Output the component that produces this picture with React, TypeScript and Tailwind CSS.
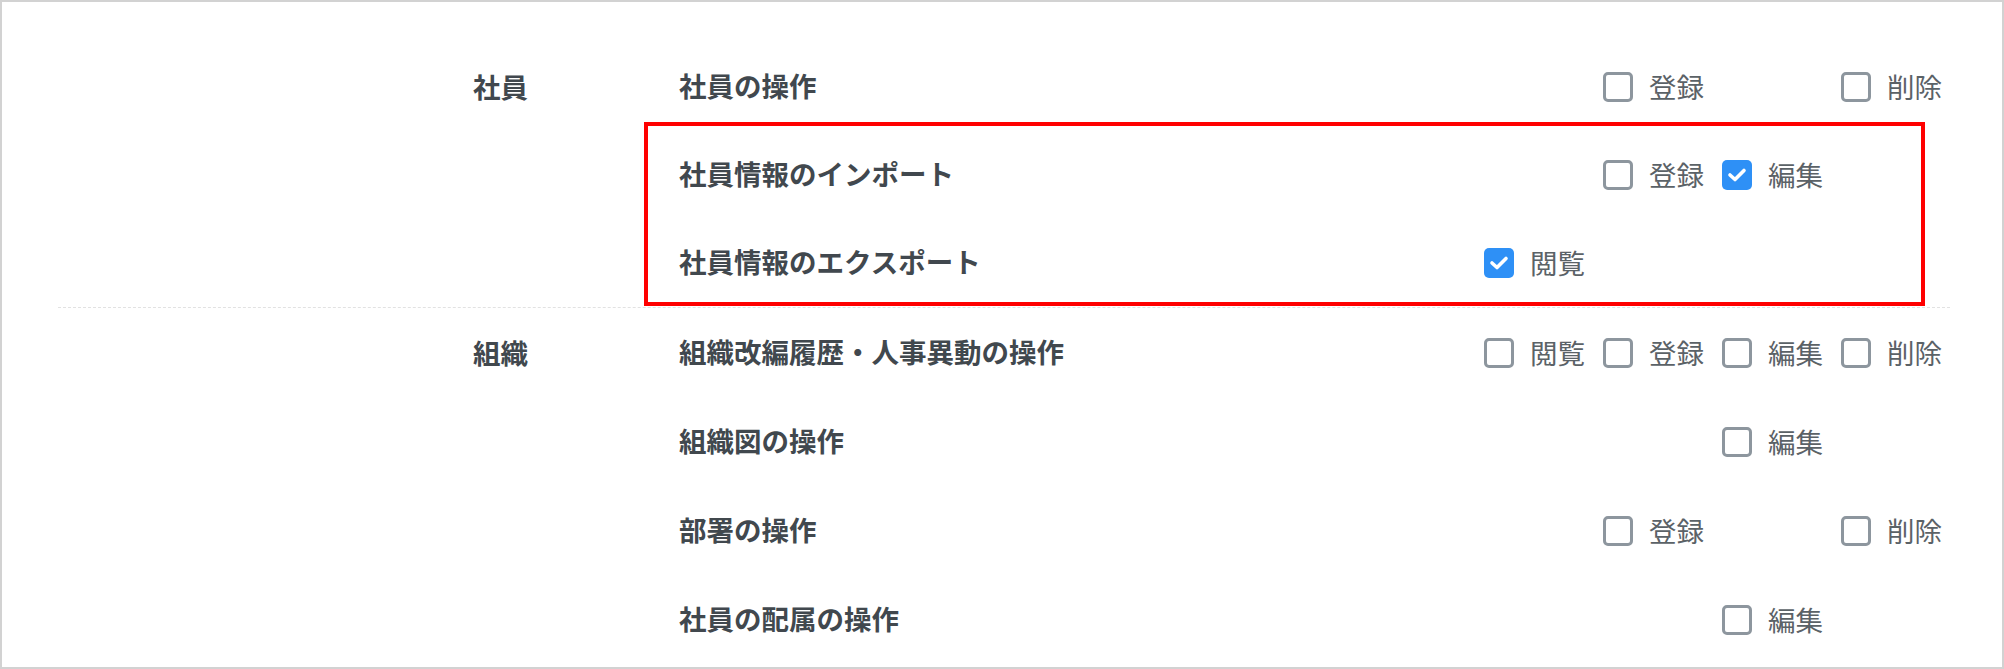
import React from 'react'

type Perm = 'view' | 'create' | 'edit' | 'delete'

const PERM_LABELS: Record<Perm, string> = {
  view:   '閲覧',
  create: '登録',
  edit:   '編集',
  delete: '削除',
}

const PERM_ORDER: Perm[] = ['view', 'create', 'edit', 'delete']

type Row = {
  label: string
  perms: Partial<Record<Perm, boolean>>
}

type Section = {
  category: string
  rowHeight: string
  rows: Row[]
}

const SECTIONS: Section[] = [
  {
    category: '社員',
    rowHeight: 'h-[88px]',
    rows: [
      { label: '社員の操作',             perms: { create: false, delete: false } },
      { label: '社員情報のインポート',   perms: { create: false, edit: true } },
      { label: '社員情報のエクスポート', perms: { view: true } },
    ],
  },
  {
    category: '組織',
    rowHeight: 'h-[89px]',
    rows: [
      { label: '組織改編履歴・人事異動の操作', perms: { view: false, create: false, edit: false, delete: false } },
      { label: '組織図の操作',                 perms: { edit: false } },
      { label: '部署の操作',                   perms: { create: false, delete: false } },
      { label: '社員の配属の操作',             perms: { edit: false } },
    ],
  },
]

function CheckBox({ checked }: { checked: boolean }) {
  if (checked) {
    return (
      <span className="w-[30px] h-[30px] rounded-[5px] bg-[#2e90f6] flex items-center justify-center shrink-0">
        <svg width="20" height="16" viewBox="0 0 20 16" fill="none">
          <path d="M3 8 L8 12.5 L17 3.5" stroke="white" strokeWidth="3.6" strokeLinecap="round" strokeLinejoin="round" />
        </svg>
      </span>
    )
  }
  return <span className="w-[30px] h-[30px] rounded-[5px] border-[3px] border-[#8d969e] bg-white shrink-0" />
}

function PermCell({ perm, value }: { perm: Perm; value: boolean | undefined }) {
  return (
    <div className="w-[119px] flex items-center">
      {value !== undefined && (
        <label className="flex items-center gap-[16px]">
          <CheckBox checked={value} />
          <span className="text-[27.5px] text-[#5b6267] leading-none">{PERM_LABELS[perm]}</span>
        </label>
      )}
    </div>
  )
}

export default function App() {
  return (
    <div
      className="relative w-[2004px] h-[669px] overflow-hidden bg-white border-2 border-[#d2d2d2]"
      style={{ fontFamily: '"Noto Sans CJK JP", "Noto Sans", sans-serif' }}
    >
      <div className="ml-[56px] pt-[41px] w-[1892px]">
        {SECTIONS.map((section, si) => (
          <div
            key={section.category}
            className={si > 0 ? 'flex border-t border-dashed border-[#e2e2e2]' : 'flex'}
          >
            {/* Category */}
            <div className={`w-[621px] shrink-0 pl-[415px] flex items-center self-start ${section.rowHeight}`}>
              <span className="text-[27.5px] font-bold text-[#41484e] leading-none">{section.category}</span>
            </div>

            {/* Rows */}
            <div className="flex flex-col">
              {section.rows.map((row) => (
                <div key={row.label} className={`flex items-center ${section.rowHeight}`}>
                  <div className="w-[805px] shrink-0">
                    <span className="text-[27.5px] font-bold text-[#41484e] leading-none">{row.label}</span>
                  </div>
                  <div className="flex">
                    {PERM_ORDER.map((p) => (
                      <PermCell key={p} perm={p} value={row.perms[p]} />
                    ))}
                  </div>
                </div>
              ))}
            </div>
          </div>
        ))}
      </div>

      {/* Highlight annotation */}
      <div className="absolute left-[642px] top-[120px] w-[1281px] h-[184px] border-4 border-[#ff0000] pointer-events-none" />
    </div>
  )
}
